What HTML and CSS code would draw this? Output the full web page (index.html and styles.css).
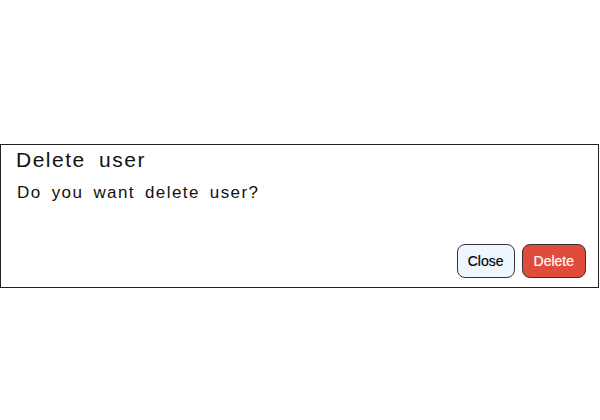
FILE: index.html
```html
<!DOCTYPE html>
<html>
<head>
<meta charset="utf-8">
<link rel="stylesheet" href="styles.css">
</head>
<body>
<div class="dialog">
  <div class="title">Delete user</div>
  <div class="message">Do you want delete user?</div>
  <div class="actions">
    <button class="btn btn-close">Close</button>
    <button class="btn btn-delete">Delete</button>
  </div>
</div>
</body>
</html>
```
FILE: styles.css
```css
html, body {
  margin: 0;
  padding: 0;
  background: #fff;
}
body {
  padding-top: 144px;
}
.dialog {
  width: 599px;
  height: 144px;
  box-sizing: border-box;
  border: 1px solid #222;
  padding: 2px 12px 9px 15px;
  display: flex;
  flex-direction: column;
  font-family: "Liberation Sans", Arial, sans-serif;
  color: #111;
}
.title {
  font-size: 21px;
  letter-spacing: 1.5px;
  word-spacing: 6px;
  line-height: 26px;
}
.message {
  margin-top: 9px;
  font-size: 17px;
  letter-spacing: 1.4px;
  word-spacing: 4px;
  line-height: 22px;
  padding-left: 1px;
}
.actions {
  margin-top: auto;
  display: flex;
  justify-content: flex-end;
  gap: 7px;
}
.btn {
  height: 34px;
  border: 1px solid #333;
  border-radius: 8px;
  font-family: "Liberation Sans", Arial, sans-serif;
  font-size: 14px;
  padding: 0 11px;
  -webkit-text-stroke: 0.2px currentColor;
}
.btn-close {
  background: #eef6ff;
  color: #000;
  padding: 0 10px;
}
.btn-delete {
  background: #e04b3a;
  color: #fff;
}
```
